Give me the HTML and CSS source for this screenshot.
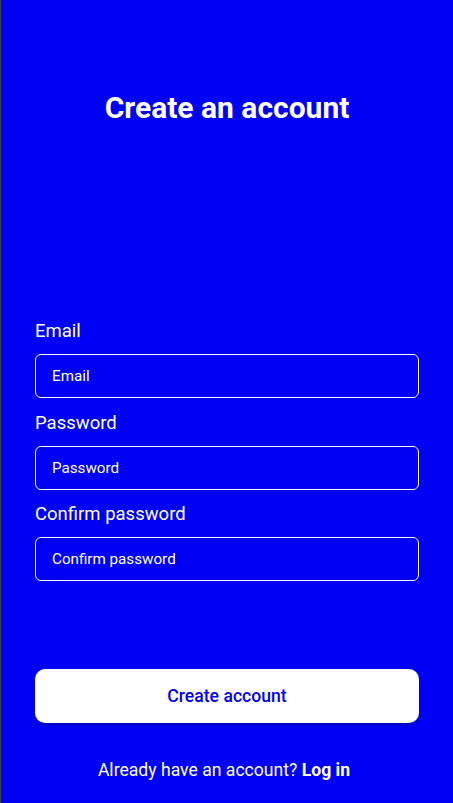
FILE: index.html
```html
<!DOCTYPE html>
<html lang="en">
<head>
<meta charset="utf-8">
<title>Create an account</title>
<link rel="stylesheet" href="styles.css">
</head>
<body>
<main class="screen">
  <h1 class="title">Create an account</h1>
  <form class="form">
    <div class="field">
      <label class="label" for="email">Email</label>
      <input class="input" id="email" type="email" placeholder="Email">
    </div>
    <div class="field">
      <label class="label" for="password">Password</label>
      <input class="input" id="password" type="password" placeholder="Password">
    </div>
    <div class="field">
      <label class="label" for="confirm">Confirm password</label>
      <input class="input" id="confirm" type="password" placeholder="Confirm password">
    </div>
    <button class="submit" type="button">Create account</button>
  </form>
  <p class="footer">Already have an account? <a class="login" href="#">Log in</a></p>
</main>
</body>
</html>
```
FILE: styles.css
```css
* { box-sizing: border-box; }
html, body { margin: 0; padding: 0; }
body {
  background: #0000f5;
  font-family: Roboto, "Noto Sans", sans-serif;
  color: #fff;
}
.screen {
  min-height: 803px;
  padding: 0 34px 0 35px;
  display: flex;
  flex-direction: column;
  box-shadow: inset 1px 0 0 #3a4a3a;
}
.title {
  margin: 91px 0 0;
  font-size: 30px;
  line-height: 34px;
  font-weight: 700;
  text-align: center;
}
.form {
  margin-top: 195px;
  display: flex;
  flex-direction: column;
}
.field {
  display: flex;
  flex-direction: column;
  margin-bottom: 13.5px;
}
.label {
  font-size: 18.5px;
  line-height: 22px;
  margin-bottom: 12px;
}
.input {
  height: 44px;
  border: 1px solid #fff;
  border-radius: 6px;
  background: transparent;
  padding: 0 16px;
  font-family: inherit;
  font-size: 15.2px;
  color: #fff;
  outline: none;
}
.input::placeholder { color: #fff; opacity: 1; }
.submit {
  margin-top: 74px;
  height: 54px;
  border: none;
  border-radius: 10px;
  background: #fff;
  color: #0000f5;
  font-family: inherit;
  font-size: 17.6px;
  font-weight: 500;
  box-shadow: 0 2px 3px rgba(0,0,0,0.25);
}
.footer {
  margin: 36px 0 0;
  padding-right: 6px;
  text-align: center;
  font-size: 17.6px;
  line-height: 22px;
}
.login {
  color: #fff;
  font-weight: 700;
  text-decoration: none;
}
```
